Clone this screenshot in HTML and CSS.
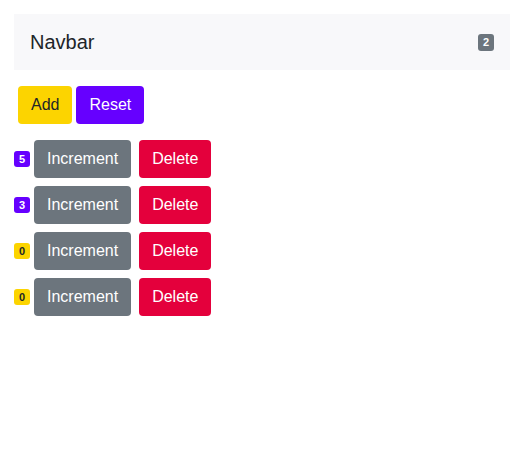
FILE: index.html
```html
<!DOCTYPE html>
<html lang="en">
<head>
<meta charset="utf-8">
<title>Counters</title>
<link rel="stylesheet" href="styles.css">
</head>
<body>
<div class="app">
  <nav class="navbar">
    <span class="brand">Navbar</span>
    <span class="badge badge-gray">2</span>
  </nav>
  <div class="controls">
    <button class="btn btn-yellow">Add</button>
    <button class="btn btn-purple">Reset</button>
  </div>
  <div class="counters">
    <div class="counter">
      <span class="badge badge-purple">5</span>
      <button class="btn btn-gray">Increment</button>
      <button class="btn btn-red">Delete</button>
    </div>
    <div class="counter">
      <span class="badge badge-purple">3</span>
      <button class="btn btn-gray">Increment</button>
      <button class="btn btn-red">Delete</button>
    </div>
    <div class="counter">
      <span class="badge badge-yellow">0</span>
      <button class="btn btn-gray">Increment</button>
      <button class="btn btn-red">Delete</button>
    </div>
    <div class="counter">
      <span class="badge badge-yellow">0</span>
      <button class="btn btn-gray">Increment</button>
      <button class="btn btn-red">Delete</button>
    </div>
  </div>
</div>
</body>
</html>
```
FILE: styles.css
```css
* { box-sizing: border-box; }
body {
  margin: 0;
  background: #fff;
  font-family: "Liberation Sans", Arial, sans-serif;
  color: #212529;
}
.app {
  padding: 14px 12px 0 14px;
}
.navbar {
  height: 56px;
  background: #f8f8fa;
  display: flex;
  align-items: center;
  justify-content: space-between;
  padding: 0 16px 0 16px;
}
.brand {
  font-size: 20px;
  color: #212529;
}
.badge {
  display: inline-flex;
  align-items: center;
  justify-content: center;
  width: 16px;
  height: 16px;
  font-size: 11px;
  font-weight: bold;
  line-height: 1;
  border-radius: 3px;
  color: #fff;
}
.badge-gray { background: #6c757d; height: 17px; }
.badge-purple { background: #6600ff; }
.badge-yellow { background: #fcd400; color: #212529; }
.controls {
  display: flex;
  gap: 4px;
  margin-top: 16px;
  padding-left: 4px;
}
.btn {
  font-family: inherit;
  font-size: 16px;
  line-height: 24px;
  padding: 7px 13px;
  border: 0;
  border-radius: 4px;
  color: #fff;
  cursor: pointer;
}
.btn-yellow { background: #fcd400; color: #212529; }
.btn-purple { background: #6600ff; }
.btn-gray { background: #6c757d; }
.btn-red { background: #e4003c; }
.counters {
  display: flex;
  flex-direction: column;
  gap: 8px;
  margin-top: 16px;
}
.counter {
  display: flex;
  align-items: center;
}
.counter .badge { margin-right: 4px; }
.counter .btn-red { margin-left: 8px; }
```
